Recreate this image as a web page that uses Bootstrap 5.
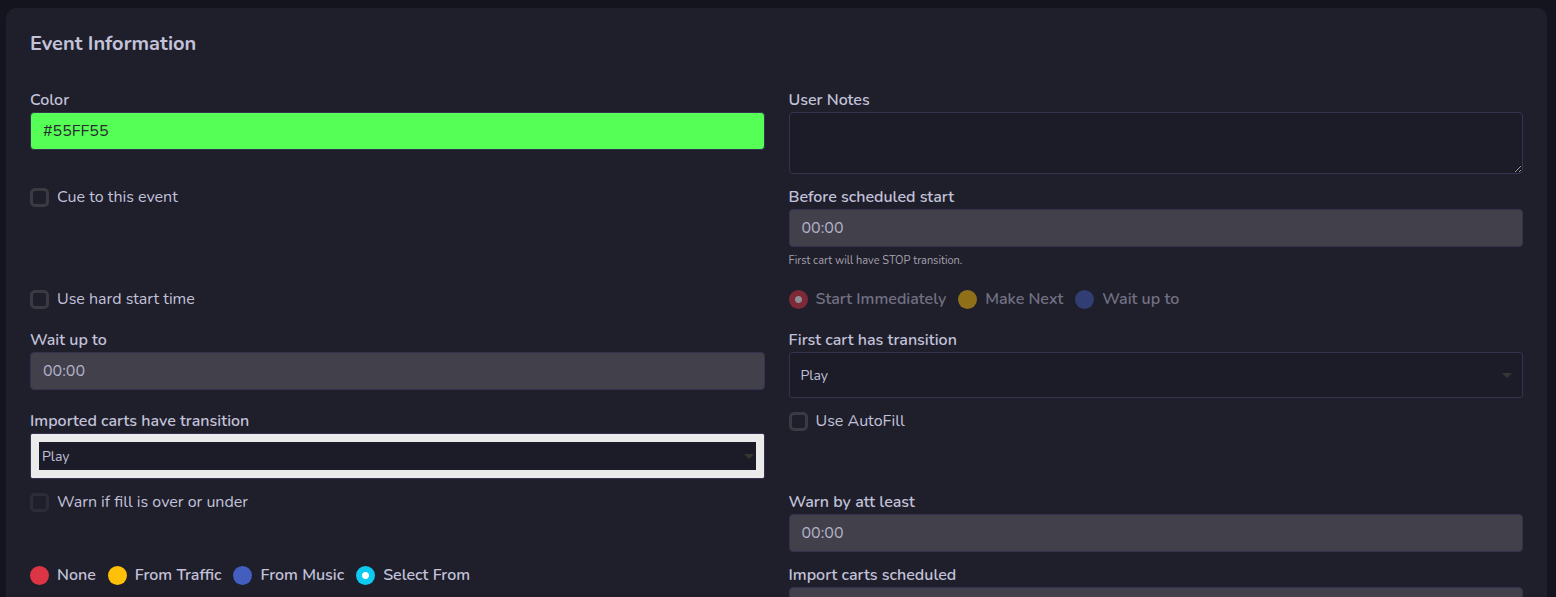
<!DOCTYPE html>
<html lang="en" data-bs-theme="dark">
<head>
<meta charset="utf-8">
<meta name="viewport" content="width=device-width, initial-scale=1">
<title>Event Information</title>
<link rel="stylesheet" href="https://cdn.jsdelivr.net/npm/bootstrap@5.3.0/dist/css/bootstrap.min.css">
<style>
  body { background: #14141f; color: #c2c2d9; font-family: Nunito, "Open Sans", sans-serif; font-size: 16px; line-height: 24px; }
  .page-wrap { padding: 8px 9px 24px 6px; }
  .event-card { background: #1f1e2b; border: 0; border-radius: 10px; color: inherit; }
  .event-title { color: #c2c2d9; font-size: 20px; font-weight: 700; line-height: 24px; margin: 0 0 32px; }
  .event-form { row-gap: 11px; }
  .field-label { display: block; font-weight: 600; }
  .form-control, .form-control:disabled { background: #1c1b28; border-color: #35324f; border-radius: 4px; color: #c2c2d9; font-size: 16px; height: 38px; padding: 6px 12px; }
  .form-control:disabled { background: #41404b; color: #b4b3c9; opacity: 1; }
  .form-control.color-value { background: #55ff55; color: #28282f; }
  textarea.form-control { height: 62px; min-height: 62px; }
  .hint { color: #a3a1ad; font-size: 11px; line-height: 21px; padding: 3px 0 5px; }
  .form-select { background-color: #1c1b28; background-image: url("data:image/svg+xml,%3Csvg xmlns='http://www.w3.org/2000/svg' viewBox='0 0 10 5'%3E%3Cpath fill='%2338372f' d='M0 0h10L5 5z'/%3E%3C/svg%3E"); background-size: 10px 5px; background-position: right 10px center; border-color: #35324f; border-radius: 3px; color: #c2c2d9; font-size: 14px; height: 46px; padding: 6px 30px 6px 11px; }
  .form-select.framed { border-radius: 2px; box-shadow: inset 0 0 0 8px #ebebeb; }
  .choice { display: flex; align-items: center; gap: 8px; min-height: 24px; }
  .choice .form-check-input { background-color: #1f1e2b; border: 3px solid #3b3a42; border-radius: 5px; flex: none; float: none; height: 19px; margin: 0; width: 19px; }
  .choice .form-check-input:disabled { opacity: .5; }
  .choice .form-check-input[type=radio] { background-color: var(--tone); border: 0; border-radius: 50%; background-image: none; }
  .choice .form-check-input[type=radio]:checked { background-image: radial-gradient(circle, #fff 3px, transparent 4px); }
  .choice .form-check-input:disabled ~ label { opacity: 1; }
  .choice-group { display: flex; flex-wrap: wrap; column-gap: 12px; min-height: 30px; align-items: start; font-weight: 600; }
  .choice-group .choice .form-check-input:disabled ~ label { opacity: .5; }
  .tone-red { --tone: #dc3545; } .tone-yellow { --tone: #ffc107; } .tone-blue { --tone: #435ebe; } .tone-cyan { --tone: #0dcaf0; }
</style>
</head>
<body>
<main class="page-wrap">
  <section class="card event-card p-4">
    <h1 class="event-title">Event Information</h1>
    <form class="row event-form">
      <div class="col-6">
        <label class="field-label" for="color">Color</label>
        <input class="form-control color-value" id="color" type="text" value="#55FF55">
      </div>
      <div class="col-6">
        <label class="field-label" for="notes">User Notes</label>
        <textarea class="form-control" id="notes"></textarea>
      </div>

      <div class="col-6">
        <div class="choice"><input class="form-check-input" type="checkbox" id="cue"><label for="cue">Cue to this event</label></div>
      </div>
      <div class="col-6">
        <label class="field-label" for="before">Before scheduled start</label>
        <input class="form-control" id="before" type="text" value="00:00" disabled>
        <div class="hint">First cart will have STOP transition.</div>
      </div>

      <div class="col-6">
        <div class="choice"><input class="form-check-input" type="checkbox" id="hard"><label for="hard">Use hard start time</label></div>
      </div>
      <div class="col-6">
        <div class="choice-group">
          <div class="choice"><input class="form-check-input tone-red" type="radio" name="start" id="immediately" checked disabled><label for="immediately">Start Immediately</label></div>
          <div class="choice"><input class="form-check-input tone-yellow" type="radio" name="start" id="next" disabled><label for="next">Make Next</label></div>
          <div class="choice"><input class="form-check-input tone-blue" type="radio" name="start" id="waitupto" disabled><label for="waitupto">Wait up to</label></div>
        </div>
      </div>

      <div class="col-6">
        <label class="field-label" for="wait">Wait up to</label>
        <input class="form-control" id="wait" type="text" value="00:00" disabled>
      </div>
      <div class="col-6">
        <label class="field-label" for="first">First cart has transition</label>
        <select class="form-select" id="first"><option>Play</option><option>Segue</option></select>
      </div>

      <div class="col-6">
        <label class="field-label" for="imported">Imported carts have transition</label>
        <select class="form-select framed" id="imported"><option>Play</option><option>Segue</option></select>
      </div>
      <div class="col-6">
        <div class="choice"><input class="form-check-input" type="checkbox" id="autofill"><label for="autofill">Use AutoFill</label></div>
      </div>

      <div class="col-6">
        <div class="choice"><input class="form-check-input" type="checkbox" id="warn" disabled><label for="warn">Warn if fill is over or under</label></div>
      </div>
      <div class="col-6">
        <label class="field-label" for="least">Warn by att least</label>
        <input class="form-control" id="least" type="text" value="00:00" disabled>
      </div>

      <div class="col-6">
        <div class="choice-group">
          <div class="choice"><input class="form-check-input tone-red" type="radio" name="source" id="none"><label for="none">None</label></div>
          <div class="choice"><input class="form-check-input tone-yellow" type="radio" name="source" id="traffic"><label for="traffic">From Traffic</label></div>
          <div class="choice"><input class="form-check-input tone-blue" type="radio" name="source" id="music"><label for="music">From Music</label></div>
          <div class="choice"><input class="form-check-input tone-cyan" type="radio" name="source" id="select" checked><label for="select">Select From</label></div>
        </div>
      </div>
      <div class="col-6">
        <label class="field-label" for="scheduled">Import carts scheduled</label>
        <input class="form-control" id="scheduled" type="text" disabled>
      </div>
    </form>
  </section>
</main>
<script src="https://cdn.jsdelivr.net/npm/bootstrap@5.3.0/dist/js/bootstrap.bundle.min.js"></script>
</body>
</html>
